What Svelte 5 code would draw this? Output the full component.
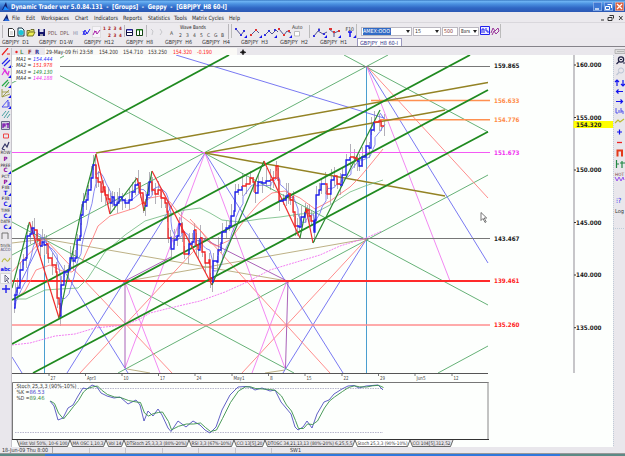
<script>
  const menu = [['File', 12, 8], ['Edit', 26, 9], ['Workspaces', 41, 28], ['Chart', 75, 13], ['Indicators', 93.5, 24], ['Reports', 123, 19], ['Statistics', 147.5, 22], ['Tools', 174, 13], ['Matrix Cycles', 192, 32], ['Help', 229, 11]];
  const sheets = [['GBPJPY  D1', 2, 27], ['GBPJPY  D1-W', 39, 34], ['GBPJPY  H12', 84, 30], ['GBPJPY  H8', 126, 27], ['GBPJPY  H6', 165, 27], ['GBPJPY  H4', 202, 28], ['GBPJPY  H3', 241, 27], ['GBPJPY  H2', 280, 28], ['GBPJPY  H1', 320, 27]];
  const quotes = [['29-May-09 Fri 23:58', 47, '#333', 6], ['154.200', 19, '#333', 5], ['154.710', 20, '#333', 5], ['153.250', 19, '#333', 6], ['154.320', 19, '#f22', 5], ['-0.190', 15, '#f22', 0]];
  const studies = [['Hist Vol 50%, 10-6 100', 53], ['MA OSC 1,10,3', 36], ['Vol 14', 18], ['DTStoch 25,3,3,3 (80%-20%)', 65], ['RSI 3,3 (67%-10%)', 45], ['CCI 13[5],20', 31], ['DTOSC 34,21,13,13 (80%-20%) 6,25,5,5', 90], ['Stoch 25,3,3 (90%-10%)', 55, 1], ['CCI 104[5],312,52', 43]];
  const gaps = (list) => list.map((m, i) => i === 0 ? m[1] : m[1] - list[i - 1][1] - list[i - 1][2]);
  const menuGap = gaps(menu), sheetGap = gaps(sheets);

  // x1, y1, x2, y2
  const green = [[12, 171.7, 229, 55], [12, 300, 470, 55], [12, 344, 488, 90], [33, 373, 488, 131.7]];
  const thin = [
    ['#55a868', [[60, 75.7, 488, 305], [344, 55, 488, 132], [12, 255, 388, 55], [12, 222, 294, 373], [118, 373, 488, 175], [438, 373, 488, 346], [12, 83, 64, 56]]],
    ['#b5a878', [[12, 243, 45, 239], [45, 239, 287, 281], [125, 281.5, 366, 239], [265, 373, 285, 370], [127, 369, 150, 373]]],
    ['#6a6af0', [[176, 55, 384, 118], [205, 153, 67, 373], [205, 153, 343, 373], [366.5, 66, 488, 263], [366.5, 239, 283, 373], [43, 237, 128, 373], [12, 357, 22, 373], [43, 237, 14, 296], [380, 113, 385, 120]]],
    ['#ff8080', [[366.5, 66, 488, 198], [366.5, 239, 242, 373], [45, 239, 172, 373], [190, 219, 330, 373], [80, 373, 205, 239], [12, 271.7, 43, 239], [12, 325, 490, 325]]],
    ['#f07af0', [[205, 153, 125, 368], [205, 153, 285, 368], [125, 282, 160, 373], [287, 281, 252, 373], [366.5, 66, 450, 281]]],
    ['#a050b0', [[125, 281, 125, 368], [288, 281, 285.5, 368], [125, 281, 171, 257], [200, 237, 287, 281]]]
  ];
  const olive = [[96, 153, 488, 82.5], [205, 153, 445, 110], [205, 153, 445, 196]];
  const swings = [
    ['g', 12, 288, 29.5, 222], ['r', 29.5, 222, 59, 318], ['g', 59, 318, 82, 207], ['g', 82, 207, 96, 154], ['r', 96, 154, 110, 214], ['g', 110, 214, 137, 178], ['r', 137, 178, 144, 211], ['g', 144, 211, 152, 171],
    ['r', 152, 171, 212, 285], ['g', 212, 285, 264, 161], ['r', 264, 161, 300, 238], ['g', 300, 238, 306, 208], ['r', 306, 208, 313, 243], ['g', 313, 243, 380, 110]];

  // Price staircase, one run per direction
  const runs = [
    ['b', [14, 308, 15, 295, 17, 288, 20, 270, 23, 260, 26, 258, 27, 236, 30, 234, 32, 228, 34, 234]],
    ['r', [34, 230, 37, 240, 40, 246]], ['b', [40, 246, 42, 242, 44, 245, 46, 244]],
    ['r', [46, 244, 48, 258, 52, 265, 56, 272, 57, 298, 59, 304, 60, 316]],
    ['b', [60, 316, 61, 285, 64, 272, 68, 270, 70, 258, 73, 261, 75, 258, 77, 240, 80, 236, 81, 215, 83, 202, 86, 200, 88, 190, 91, 178, 93, 165, 95, 165]],
    ['r', [95, 165, 96, 178, 98, 182, 101, 192, 103, 187, 105, 195, 108, 199, 110, 203]],
    ['b', [110, 203, 112, 197, 114, 205, 117, 203, 119, 197, 122, 200, 125, 203, 129, 200, 132, 192, 135, 185, 138, 183]],
    ['r', [138, 183, 140, 193, 143, 203, 145, 206]], ['b', [145, 206, 147, 195, 149, 182, 151, 182]],
    ['r', [151, 182, 152, 190, 155, 194, 158, 190, 161, 198, 165, 203, 167, 212, 168, 238, 170, 238]],
    ['b', [170, 238, 171, 249, 174, 240, 177, 236, 179, 224, 181, 224]], ['r', [181, 224, 182, 232, 184, 254, 188, 254]],
    ['b', [188, 254, 189, 244, 192, 242, 194, 230]], ['r', [194, 230, 196, 245, 198, 250]], ['b', [198, 250, 200, 238]],
    ['r', [200, 238, 202, 252, 205, 263, 209, 260, 210, 278, 212, 282]],
    ['b', [212, 282, 213, 261, 217, 262, 218, 250, 221, 243, 222, 232, 226, 228, 229, 226, 231, 216, 234, 211, 235, 192, 238, 190, 242, 186]],
    ['r', [242, 186, 246, 184, 250, 178, 253, 182, 255, 193]], ['b', [255, 193, 258, 182, 262, 183, 266, 181, 270, 180]],
    ['r', [270, 180, 273, 178, 276, 166, 278, 180, 279, 201]], ['b', [279, 201, 283, 200, 286, 196, 288, 194]],
    ['r', [288, 194, 290, 200, 293, 196, 293, 212, 295, 226, 297, 226]], ['b', [297, 226, 299, 227, 301, 217, 305, 212]],
    ['r', [305, 212, 307, 210, 309, 216, 311, 221, 313, 221]],
    ['b', [313, 221, 314, 232, 315, 220, 316, 195, 319, 190, 321, 184, 325, 184]], ['r', [325, 184, 327, 194, 330, 194]],
    ['b', [330, 194, 331, 180, 334, 176]], ['r', [334, 176, 337, 184, 340, 185]], ['b', [340, 185, 342, 175, 346, 160, 350, 157]],
    ['r', [350, 157, 354, 158, 357, 161]], ['b', [357, 161, 359, 166, 362, 157, 366, 146, 369, 148, 371, 130, 374, 122]],
    ['r', [374, 122, 379, 121, 381, 126, 384, 126]]];
  const step = (p) => {
    let d = `M${p[0]} ${p[1]}`;
    for (let i = 2; i < p.length; i += 2) d += `H${p[i]}V${p[i + 1]}`;
    return d;
  };
  const pts = [];
  for (const r of runs) for (let i = 0; i < r[1].length; i += 2) pts.push([r[1][i], r[1][i + 1]]);
  const wicks = pts.map(([x, y], i) => `M${x + 0.5} ${y - 5 - (i * 7) % 9}V${y + 5 + (i * 5) % 10}`).join('');
  const average = (list, n, shift) => list.map((p, i) => {
    const part = list.slice(Math.max(0, i - n + 1), i + 1);
    return `${p[0] + shift},${(part.reduce((s, q) => s + q[1], 0) / part.length).toFixed(1)}`;
  }).join(' ');
  const ma1 = average(pts, 6, 1);
  const ma2 = '14,300 25,291 36,270 50,265 62,271 72,272 82,262 92,240 98,226 110,216 135,208 150,198 160,196 170,202 180,215 200,230 210,243 217,246 230,240 246,218 260,202 272,193 285,191 300,198 315,209 330,201 350,187 360,177 370,165 383,149';
  const ma3 = '14,299 26,299 45,290 60,289 78,288 88,278 105,252 125,235 145,221 165,215 185,210 200,208 210,213 222,220 240,222 260,219 280,217 300,214 315,213 330,205 350,192 365,186 383,180';
  const ma4 = '12,345 30,343 55,336 75,334 95,328 125,325 140,319 150,313 170,308 200,301 225,292 245,283 270,270 300,261 320,255 340,246 366,238 382,231';
  const k = [[50, 401], [54, 406], [58, 420], [63, 418], [68, 408], [73, 405], [78, 396], [83, 388], [87, 389], [92, 385], [97, 387], [101, 393], [107, 396], [114, 398], [120, 397], [128, 404], [136, 400], [140, 405], [144, 421], [148, 411], [153, 416], [158, 409], [162, 415], [168, 428], [171, 431.5], [178, 421], [186, 427], [193, 421], [200, 425], [205, 430], [210, 433], [216, 427], [222, 410], [230, 395], [238, 387], [245, 386.5], [250, 387], [255, 390], [262, 388], [270, 391], [275, 390], [281, 402], [286, 408], [291, 414], [295, 427], [298, 430], [303, 427], [307, 421], [312, 428], [317, 414], [324, 402], [329, 400], [334, 394], [342, 389], [348, 386], [354, 385.5], [359, 388], [366, 386], [372, 385.5], [378, 385], [383, 390]];
  const kLine = k.map((p) => p.join()).join(' ');
  const dLine = average(k, 2, 0.5);

  const levels = [['159.865', 66, '#222'], ['156.633', 100.5, '#ff8c4a'], ['154.776', 119.7, '#ff8c4a'], ['151.673', 152.5, '#f030f0'], ['143.467', 238.5, '#222'], ['139.461', 281, '#f22'], ['135.260', 325, '#f22']];
  const scale = [['160.000', 65], ['155.000', 117.5], ['150.000', 170], ['145.000', 222.5], ['140.000', 275], ['135.000', 327.7]];
  const dates = [['27', 49, 5], ['Apr3', 85.5, 9], ['10', 122, 5], ['17', 158.5, 5], ['24', 195, 5], ['May1', 232, 11], ['8', 268.5, 2.8], ['15', 305, 5], ['22', 342, 5], ['29', 378.5, 5], ['Jun5', 415, 9], ['12', 452, 5]];
  const mas = [['MA1 =', '154.444', '#33f', 59], ['MA2 =', '151.978', '#f22', 65.3], ['MA3 =', '149.130', '#2a8a3a', 71.6], ['MA4 =', '144.188', '#f030f0', 78]];
  const railText = [['ROW', 154, '#333', 10, 4.4], ['P', 160.5, '#809', 4, 6], ['PREE', 166.5, '#333', 10, 4.4], ['C', 172, '#809', 4, 6], ['PCT', 178, '#333', 8, 4.4], ['P', 183.5, '#809', 4, 6], ['FIB', 189, '#333', 8, 4.4], ['T', 194.5, '#11e', 4, 6], ['FIB', 200, '#333', 8, 4.4], ['C', 206, '#11e', 4, 6], ['TIME', 211.5, '#333', 9, 4.4], ['C', 217.5, '#11e', 4, 6], ['DATE', 223, '#333', 10, 4.4], ['C', 228.5, '#11e', 4, 6], ['tm/lk', 246.5, '#333', 10, 4.4], ['ACCO', 251, '#446', 10, 4.4], ['abc', 271, '#11e', 10, 5.5]];
</script>

{#snippet fit(text, w, size = 5.6, color = '#333', bold = false)}
  <svg class="fit" width={w + 1} height="10" viewBox="0 0 {w + 1} 10"><text y="7" textLength={w} lengthAdjust="spacingAndGlyphs" font-size={size} fill={color} font-weight={bold ? 700 : 400}>{text}</text></svg>
{/snippet}

<div class="app">
  <header class="title">
    <svg width="11" height="12"><path d="M2 10L6 2L8 10Z" fill="#102070" /><path d="M3 10L5 6L9 10Z" fill="#1a8cff" /></svg>
    {@render fit('Dynamic Trader ver 5.0.84.131  -  [Groups]  -  Geppy  -  [GBPJPY_H8 60-I]', 216, 6.6, '#fff', true)}
    <div class="buttons">
      <span class="win"><svg width="9" height="9"><path d="M2 7h4" stroke="#fff" stroke-width="1.3" /></svg></span>
      <span class="win"><svg width="9" height="9"><path d="M3.500 2.500h4v3.500M1.500 4.500h4v3h-4z" fill="none" stroke="#fff" /></svg></span>
      <span class="win close"><svg width="9" height="9"><path d="M2 2l5 5M7 2l-5 5" stroke="#fff" stroke-width="1.3" /></svg></span>
    </div>
  </header>

  <nav class="menu">
    {#each menu as m, i}<span style="margin-left:{menuGap[i]}px">{@render fit(m[0], m[2], 5.8, '#222')}</span>{/each}
    <svg class="mdi" width="26" height="9"><path d="M2 7h3M10.500 2.500h4v3M9 4.500h4v3h-4zM20 3l3.500 4M23.500 3L20 7" fill="none" stroke="#333" /></svg>
  </nav>
  <svg class="logo" width="10" height="9"><path d="M2 8L6 1L8 8Z" fill="#102070" /><path d="M3 8L5 5L9 8Z" fill="#2a6cdf" /></svg>

  <div class="tools">
    <svg width="229" height="16" viewBox="0 22 229 16">
      <path d="M2.500 24v13M228.500 23v15M124.500 24v12M146.500 24v12" stroke="#b8b6ba" />
      <path d="M8.500 27.500h4l2 2v6h-6z" fill="#fff" stroke="#333" /><path d="M10 31h3M10 33h3" stroke="#888" stroke-width=".6" />
      <path d="M18 27h4l2 2v6h-6z" fill="#dff" stroke="#234" /><circle cx="21" cy="31.500" r="2.600" fill="#1cc5d8" />
      <path d="M27 34.500v-5h3l1-1h3v2" fill="#dd6" stroke="#551" stroke-width=".8" /><path d="M27 35l2-4h6l-2 4z" fill="#ee5" stroke="#551" stroke-width=".8" />
      <path d="M38 28h7v7h-7z" fill="#14146a" /><path d="M39.500 28h4v3h-4z" fill="#dde" /><path d="M40 33h3v2h-3z" fill="#99a" />
      <text x="48" y="33.500" textLength="9" lengthAdjust="spacingAndGlyphs" font-size="5.400" fill="#755">PDL</text><text x="60" y="33.500" textLength="9" lengthAdjust="spacingAndGlyphs" font-size="5.400" fill="#755">DPL</text><text x="73" y="33.500" textLength="5" lengthAdjust="spacingAndGlyphs" font-size="5.400" fill="#88a">HI</text>
      <path d="M83 34l2-5 2 4 3-5M83 30l2 4 2-3" fill="none" stroke="#22e" />
      <path d="M92.500 25.500h8v11h-8z" fill="#f6f4f8" stroke="#ccc" stroke-dasharray="1 1" /><path d="M93 34l2-4 2 3 3-4M94 30l3 1" fill="none" stroke="#a2a" />
      <g font-size="4.600" fill="#a22" font-weight="700"><text x="103" y="28.500">1</text><text x="108" y="28.500">2</text><text x="113.500" y="28.500">3</text><text x="119" y="28.500">4</text><text x="108" y="35.500">2</text><text x="113.500" y="35.500">3</text><text x="119" y="35.500">4</text></g>
      <path d="M126.500 28.500h6v6h-6zM126.500 31.500h6" fill="#fff" stroke="#114" /><path d="M127 29h5" stroke="#33e" />
      <path d="M136.500 28.500h6v6h-6zM139.500 28v6" fill="#fff" stroke="#141" /><path d="M137 29h5" stroke="#2a2" />
      <path d="M151 28l2 2-1 4M160 28l2 3-2 3" fill="none" stroke="#c8c8cc" />
      <text x="180" y="27.800" textLength="26" lengthAdjust="spacingAndGlyphs" font-size="5.200" fill="#222">Wave Bands</text>
      <g font-size="5" fill="#444">{#each ['A', '2', '3', '4', '5', 'C', 'G', 'B'] as c, i}<text x={[170, 179, 186, 193, 200, 207, 214, 221][i]} y={i ? 35.5 : 34}>{c}</text>{/each}</g>
    </svg>
    <svg width="128" height="16" viewBox="229 22 128 16">
      <path d="M231.500 23v14M309.500 24v13M356.500 23v14" stroke="#bbb" />
      <g fill="none" stroke="#448" stroke-width=".9">
        <path d="M236 28l5 6 3-4M251 34l5-5 3 3M265 34l4-4 3 3 4-4 2 2M279 28l5 6 3-4 4 2M314 35l4-5 5 3 4-2M319 27v3M329 28l5 4 5-2M334 32v4" />
      </g>
      <path d="M250 33h2v2h-2zM255 28h2v2h-2zM278 27h2v2h-2zM283 33h2v2h-2zM288 29h2v2h-2zM329 27h3v2h-3zM333 30h2v2h-2zM338 29h2v2h-2z" fill="#d33" />
      <path d="M235 27h2v2h-2zM240 33h2v2h-2zM243 29h2v2h-2zM264 33h2v2h-2zM268 29h2v2h-2zM274 28h2v2h-2zM313 34h2v2h-2zM318 28h2v2h-2zM323 32h2v2h-2z" fill="#33d" />
      <path d="M247 37v-3l-3 3zM262 37v-3l-3 3zM277 37v-3l-3 3zM292 37v-3l-3 3zM327 37v-3l-3 3zM341 37v-3l-3 3zM356 37v-3l-3 3z" fill="#11e" />
      <path d="M294.500 30.500h5v4.500h-5z" fill="#fff" stroke="#bbb" /><text x="292" y="28" textLength="10.500" lengthAdjust="spacingAndGlyphs" font-size="5" fill="#333">Auto</text>
      <text x="345.500" y="29.500" textLength="8.500" lengthAdjust="spacingAndGlyphs" font-size="5" fill="#333">F10</text><path d="M348 31h4M350 31v5" stroke="#11e" stroke-width="1.500" />
    </svg>
    <div class="combos">
      <div class="combo c1"><span class="sel">{@render fit('AMEX:OOO', 27, 5.4, '#fff')}</span><i></i></div>
      <div class="combo c2">{@render fit('15', 6, 5.4, '#333')}<i></i></div>
      <div class="combo c3">{@render fit('500', 9, 5.4, '#833')}</div>
      <div class="combo c4">{@render fit('Bars', 9, 5.4, '#333')}<i></i></div>
      <svg width="20" height="12"><path d="M.500 1.500h9v8h-9z" fill="#eef" stroke="#22e" /><path d="M2 8V4h2v4M6 3v3h2v2" fill="none" stroke="#22e" /><path d="M11 8l2-5 2 3 3-3 1 3-3 3-2-3-2 4" fill="none" stroke="#939" /></svg>
    </div>
  </div>

  <div class="sheets">
    {#each sheets as s, i}<span style="margin-left:{sheetGap[i] - (i ? 1 : 0)}px">{@render fit(s[0], s[2], 5.6, '#333')}</span>{/each}
    <span class="current">{@render fit('GBPJPY_H8 60-I', 38, 5.6, '#338')}</span>
  </div>

  <main>
    <svg class="rail" width="12" height="399" viewBox="0 48 12 399">
      <path d="M11.500 48v399" stroke="#c6c4ca" />
      <g fill="none" stroke-width="1.200">
        <path d="M2 55l6-7M7 54h3" stroke="#e22" />
        <path d="M2 64l6-6M4 66l6-6" stroke="#22e" /><path d="M2 75l3-5 3 5 1-4M3 68l4 6" stroke="#d3d" />
        <path d="M2 86l6-6M5 87l4-5" stroke="#2a4" /><path d="M2 97V89M2 97l7-7M2 97l8-3M2 92h7" stroke="#994" stroke-width=".9" />
        <path d="M2 107l6-7v7zM9 102v5" stroke="#44e" stroke-width=".9" /><path d="M2 116l4-5M4 118l5-7M7 118l3-4" stroke="#399" stroke-width=".9" />
        <path d="M1.500 121.500h8v8h-8z" stroke="#668" fill="#d0cee0" stroke-width="1" /><path d="M3 128v-4h2v2h-2M8 123v5M6 124h3" stroke="#70a" />
        <path d="M3.500 134h5v4h-5z" stroke="#e44" stroke-width="1" /><path d="M2 149l3-5 2 3 2-5M2 149l3 1" stroke="#336" />
        <path d="M2 239v-6h6M8 233v6" stroke="#666" stroke-width=".9" /><path d="M2 262q2-5 4-2t4-2" stroke="#bb4" />
      </g>
      <path d="M.500 273.500h10v10h-10z" fill="#f8f8fc" stroke="#ccc" stroke-width=".7" /><path d="M5 275v7l2-2 1.500 3M5 275l4 4h-3" fill="#fff" stroke="#446" stroke-width=".8" />
      <path d="M2 289h8M6 285v8" stroke="#22e" stroke-width="1.400" />
      <path d="M11 68v-3l-3 3zM11 78v-3l-3 3zM11 88v-3l-3 3zM11 98v-3l-3 3zM11 109v-3l-3 3zM11 174v-3l-3 3zM11 185v-3l-3 3zM11 196v-3l-3 3zM11 207v-3l-3 3zM11 218v-3l-3 3zM11 229v-3l-3 3z" fill="#11e" />
      {#each railText as t}<text x={5.5 - t[3] / 2} y={t[1]} textLength={t[3]} lengthAdjust="spacingAndGlyphs" font-size={t[4]} fill={t[2]} font-weight={t[4] > 5 ? 700 : 400}>{t[0]}</text>{/each}
    </svg>

    <section>
      <div class="info">
        <svg width="33" height="9"><circle cx="4.500" cy="5" r="1.200" fill="#e22" /><g font-size="6" font-weight="700"><text x="8" y="7" fill="#696">L</text><text x="16" y="7" fill="#933">F</text><text x="23" y="7" fill="#339">R</text></g></svg>
        <div class="quotes">{#each quotes as q}<span style="margin-right:{q[3] - 1}px">{@render fit(q[0], q[1], 5.8, q[2])}</span>{/each}</div>
        <svg width="8" height="8"><path d="M4 1.500l1 2 2 .800-2 .800-1 2-1-2-2-.800 2-.800z" fill="#111" stroke="#111" stroke-width=".5" /></svg>
      </div>
      <svg class="chart" width="601" height="385" viewBox="12 55 601 385">
        <rect x="12" y="55" width="601" height="385" fill="#fdfffd" />
        <path d="M44.500 239V373M366.500 66V373" stroke="#4a9fd0" />
        <path d={wicks} stroke="#b2b0b8" stroke-width="1" />
        {#each thin as set}{#each set[1] as l}<line x1={l[0]} y1={l[1]} x2={l[2]} y2={l[3]} stroke={set[0]} stroke-width=".9" />{/each}{/each}
        <path d="M12 66.500H490M12 238.500H490" stroke="#777" />
        <path d="M12 152.500H490" stroke="#f45af4" /><path d="M12 325H490" stroke="#ff9090" />
        <path d="M371 100.500H490M380 119.700H490" stroke="#ff9050" stroke-width="1.500" />
        {#each olive as l}<line x1={l[0]} y1={l[1]} x2={l[2]} y2={l[3]} stroke="#938324" stroke-width="1.500" />{/each}
        <path d="M12 281H490" stroke="#ff2a2a" stroke-width="2" />
        <polyline points={ma4} fill="none" stroke="#f070f0" stroke-width=".9" stroke-dasharray="2 1" />
        <polyline points={ma3} fill="none" stroke="#6cb87c" stroke-width=".8" />
        <polyline points={ma2} fill="none" stroke="#ff7070" stroke-width=".8" />
        <polyline points={ma1} fill="none" stroke="#6b6bee" stroke-width=".8" />
        {#each green as l}<line x1={l[0]} y1={l[1]} x2={l[2]} y2={l[3]} stroke="#1f8a1f" stroke-width="1.800" />{/each}
        {#each swings as s}<line x1={s[1]} y1={s[2]} x2={s[3]} y2={s[4]} stroke={s[0] === 'g' ? '#2a8a30' : '#f02c2c'} stroke-width="1.200" />{/each}
        {#each runs as r}<path d={step(r[1])} fill="none" stroke={r[0] === 'b' ? '#1c1cf0' : '#f52222'} stroke-width="1.300" />{/each}
        <rect x="12.500" y="55" width="47.500" height="26" fill="#fdfffd" />
        {#each mas as m}<g font-size="5.600" font-style="italic"><text x="16" y={m[3] + 2} textLength="15.500" lengthAdjust="spacingAndGlyphs" fill="#333">{m[0]}</text><text x="33" y={m[3] + 2} textLength="19.500" lengthAdjust="spacingAndGlyphs" fill={m[2]}>{m[1]}</text></g>{/each}
        {#each levels as l}<text x="494" y={l[1] + 2.2} textLength="25.500" lengthAdjust="spacingAndGlyphs" font-size="6.200" font-weight="700" fill={l[2]}>{l[0]}</text>{/each}
        <path d="M574 55V373" stroke="#aaa8ae" stroke-width="1.300" />
        {#each scale as s}<path d="M574 {s[1]}h2" stroke="#333" /><text x="576" y={s[1] + 2.4} textLength="25.500" lengthAdjust="spacingAndGlyphs" font-size="6.200" font-weight="700" fill="#222">{s[0]}</text>{/each}
        <rect x="573.500" y="121" width="39.500" height="7" fill="#ff0" /><text x="576" y="126.900" textLength="25.500" lengthAdjust="spacingAndGlyphs" font-size="6.200" font-weight="700" fill="#222">154.320</text>
        <path d="M481 212.500v8l2-2 2 4 1.200-.700-2-3.800h2.500z" fill="#fff" stroke="#555" stroke-width=".8" />
        <path d="M12 373.500H488" stroke="#555" />
        {#each dates as d}<path d="M{d[1]} 373v3" stroke="#555" stroke-width=".8" /><text x={d[1] + 1.5} y="379.600" textLength={d[2]} lengthAdjust="spacingAndGlyphs" font-size="5.400" fill="#444">{d[0]}</text>{/each}
        <path d="M12.500 439.500V382.500H488.500" fill="none" stroke="#777" /><path d="M488 382V440" stroke="#888" /><path d="M12 439.500H489" stroke="#333" />
        <path d="M15 388.500H383M15 432.500H383" stroke="#9a9ab8" stroke-width=".7" stroke-dasharray="1.500 1" />
        <polyline points={kLine} fill="none" stroke="#5050c0" stroke-width=".9" />
        <polyline points={dLine} fill="none" stroke="#389048" stroke-width=".9" />
        <rect x="16" y="383.500" width="61" height="5" fill="#fdfffd" />
        <g font-size="5.600"><text x="16.500" y="387.700" textLength="60" lengthAdjust="spacingAndGlyphs" fill="#333">Stoch 25,3,3 (90%-10%)</text>
          <text x="16.500" y="394" textLength="13" lengthAdjust="spacingAndGlyphs" fill="#333">%K =</text><text x="29.500" y="394" textLength="15" lengthAdjust="spacingAndGlyphs" fill="#44c">86.53</text>
          <text x="16.500" y="400" textLength="13" lengthAdjust="spacingAndGlyphs" fill="#333">%D =</text><text x="29.500" y="400" textLength="15" lengthAdjust="spacingAndGlyphs" fill="#3a8a4a">89.46</text></g>
      </svg>
      <div class="studies">
        {#each studies as s}<svg width={s[1]} height="7"><path d="M0 0L2.500 6.500H{s[1] - 2.5}L{s[1]} 0" fill={s[2] ? '#fff' : '#e4e2e6'} stroke="#444" stroke-width=".8" /><text x="2.500" y="4.900" textLength={s[1] - 5} lengthAdjust="spacingAndGlyphs" font-size="4.800" fill="#333">{s[0]}</text></svg>{/each}
      </div>
    </section>

    <svg class="rail" width="12" height="399" viewBox="613 48 12 399">
      <path d="M613.500 55v391M613 228.500h12" stroke="#c0ccd8" stroke-dasharray="1 1" />
      <path d="M615 49.500h10v4h-10zM617 51.500h7" fill="#ddd" stroke="#aaa" stroke-width=".8" />
      <g fill="none">
        <circle cx="621" cy="59.500" r="2.600" stroke="#224" stroke-width="1.300" /><path d="M619 61.500l-2.500 2.500M620 59.500h2M623 63h2" stroke="#224" stroke-width="1.200" />
        <circle cx="621" cy="70.500" r="2.600" stroke="#bcc4d4" /><path d="M619 72.500l-2.500 2.500" stroke="#bcc4d4" stroke-width="1.200" />
        <path d="M617 86v-6M615 82l2-2 2 2M623 80v6M621 84l2 2 2-2M616 91.500h7M618.500 89.500l-2 2 2 2M616 101.500h7M620.500 99.500l2 2-2 2M617 132h5M619.500 129.500v5" stroke="#11e" stroke-width="1.200" />
        <path d="M616 108v5h2M619 110v3M621 108v5M621 111h2v3" stroke="#44e" stroke-width=".9" />
        <path d="M615 123l3-3 2 2 4-3" stroke="#bb3" stroke-width="1.200" /><path d="M617 142.500h5" stroke="#e22" stroke-width="1.300" />
        <path d="M617.500 156.500v-6h4.500v6" stroke="#e33a1a" stroke-width="2" /><path d="M616.500 160v8M616 164h3M622 161v7M620 163h5" stroke="#284" stroke-width="1.200" />
        <path d="M615 177l2 4 2-4 2 4 2-4 1 3" stroke="#95e" />
      </g>
      <text x="615" y="175.500" textLength="9" lengthAdjust="spacingAndGlyphs" font-size="4.500" fill="#744">HOT</text>
      <text x="616" y="202.500" font-size="7" fill="#11e">⁝?</text><text x="615" y="213" textLength="9" lengthAdjust="spacingAndGlyphs" font-size="5.400" fill="#333">Log</text>
    </svg>
  </main>

  <footer>
    <span class="stamp">{@render fit('18-Jun-09 Thu 8:00', 46, 5.6, '#333')}</span>
    <span class="cell"></span><span class="cell"></span><span class="cell"></span><span class="cell"></span><span class="cell"></span><span class="cell"></span>
    <span class="screen">{@render fit('SW1', 11, 5.6, '#333')}</span>
  </footer>
  <div class="desk"></div>
</div>

<style>
  .app { position: relative; width: 625px; height: 456px; overflow: hidden; background: #ebe9ed; display: flex; flex-direction: column; font-family: "DejaVu Sans Condensed", "DejaVu Sans", sans-serif; }
  svg { display: block; flex: none; overflow: visible; }
  text { white-space: pre; }
  .title { height: 12px; display: flex; align-items: center; flex: none; background: linear-gradient(#3c7cc4 0, #6ab0f2 1.500px, #4a90e0 4px, #2f66c4 8px, #2c58b4); }
  .title > :global(.fit) { margin-top: 2px; }
  .buttons { margin: 1px 1px 0 auto; display: flex; gap: 2px; }
  .win { width: 9px; height: 9px; border-radius: 1px; background: #3e78d4; box-shadow: inset 0 0 0 .5px #b8d0f4; }
  .close { background: #e0603c; }
  .menu { height: 10px; flex: none; display: flex; align-items: center; }
  .menu span { margin-right: -1px; padding-top: 1px; }
  .mdi { margin-left: auto; }
  .logo { position: absolute; left: 1px; top: 13px; }
  .tools { height: 16px; flex: none; display: flex; background: #eceaee; border-top: 1px solid #d9d7dc; box-sizing: border-box; }
  .combos { display: flex; align-items: center; gap: 1px; width: 144px; margin-top: 1px; padding-left: 4px; height: 14px; border-right: 1px solid #bbb; box-sizing: border-box; }
  .combo { height: 9px; background: #fff; border: 1px solid #bbb8c0; box-sizing: border-box; display: flex; align-items: center; padding-left: 1px; }
  .combo i { margin: 0 1px 0 auto; border: 2px solid transparent; border-top: 3px solid #222; border-bottom: 0; }
  .sel { background: #316ac5; height: 7px; display: flex; align-items: center; }
  .c1 { width: 51px; }
  .c2 { width: 28px; }
  .c3 { width: 16px; }
  .c4 { width: 20px; }
  .sheets { height: 9px; flex: none; display: flex; align-items: center; border-bottom: 1px solid #85838a; box-sizing: border-box; }
  .current { margin-left: 9px; background: #fff; border: 1px solid #9a98c0; border-bottom: 0; padding: 0 2px; height: 7px; display: flex; align-items: center; }
  main { height: 399px; display: flex; margin-top: 1px; flex: none; }
  .rail { background: #e9e7ec; overflow: hidden; }
  section { width: 601px; flex: none; background: #fdfffd; display: flex; flex-direction: column; }
  .info { height: 7px; display: flex; align-items: center; background: #e9e7ec; }
  .quotes { width: 192px; height: 7px; background: #faf9f6; display: flex; align-items: center; padding-left: 1px; box-sizing: border-box; margin-right: 2px; }
  .chart { overflow: hidden; }
  .studies { display: flex; height: 7px; padding-left: 5px; }
  footer { height: 6px; display: flex; align-items: center; background: #e9e7ec; padding-left: 2px; flex: none; }
  .stamp { width: 50px; border-right: 1px solid #aaa; height: 6px; display: flex; align-items: center; }
  .cell { width: 35.500px; height: 5px; border-right: 1px solid #c6c4ca; flex: none; }
  .screen { margin-left: 18px; height: 6px; display: flex; align-items: center; }
  .desk { height: 3px; flex: none; background: linear-gradient(90deg, #5c8a86 45px, #2f78dc 45px, #2f78dc 560px, #5c8a86 560px); border-top: 1px solid #999; box-sizing: border-box; }
</style>
